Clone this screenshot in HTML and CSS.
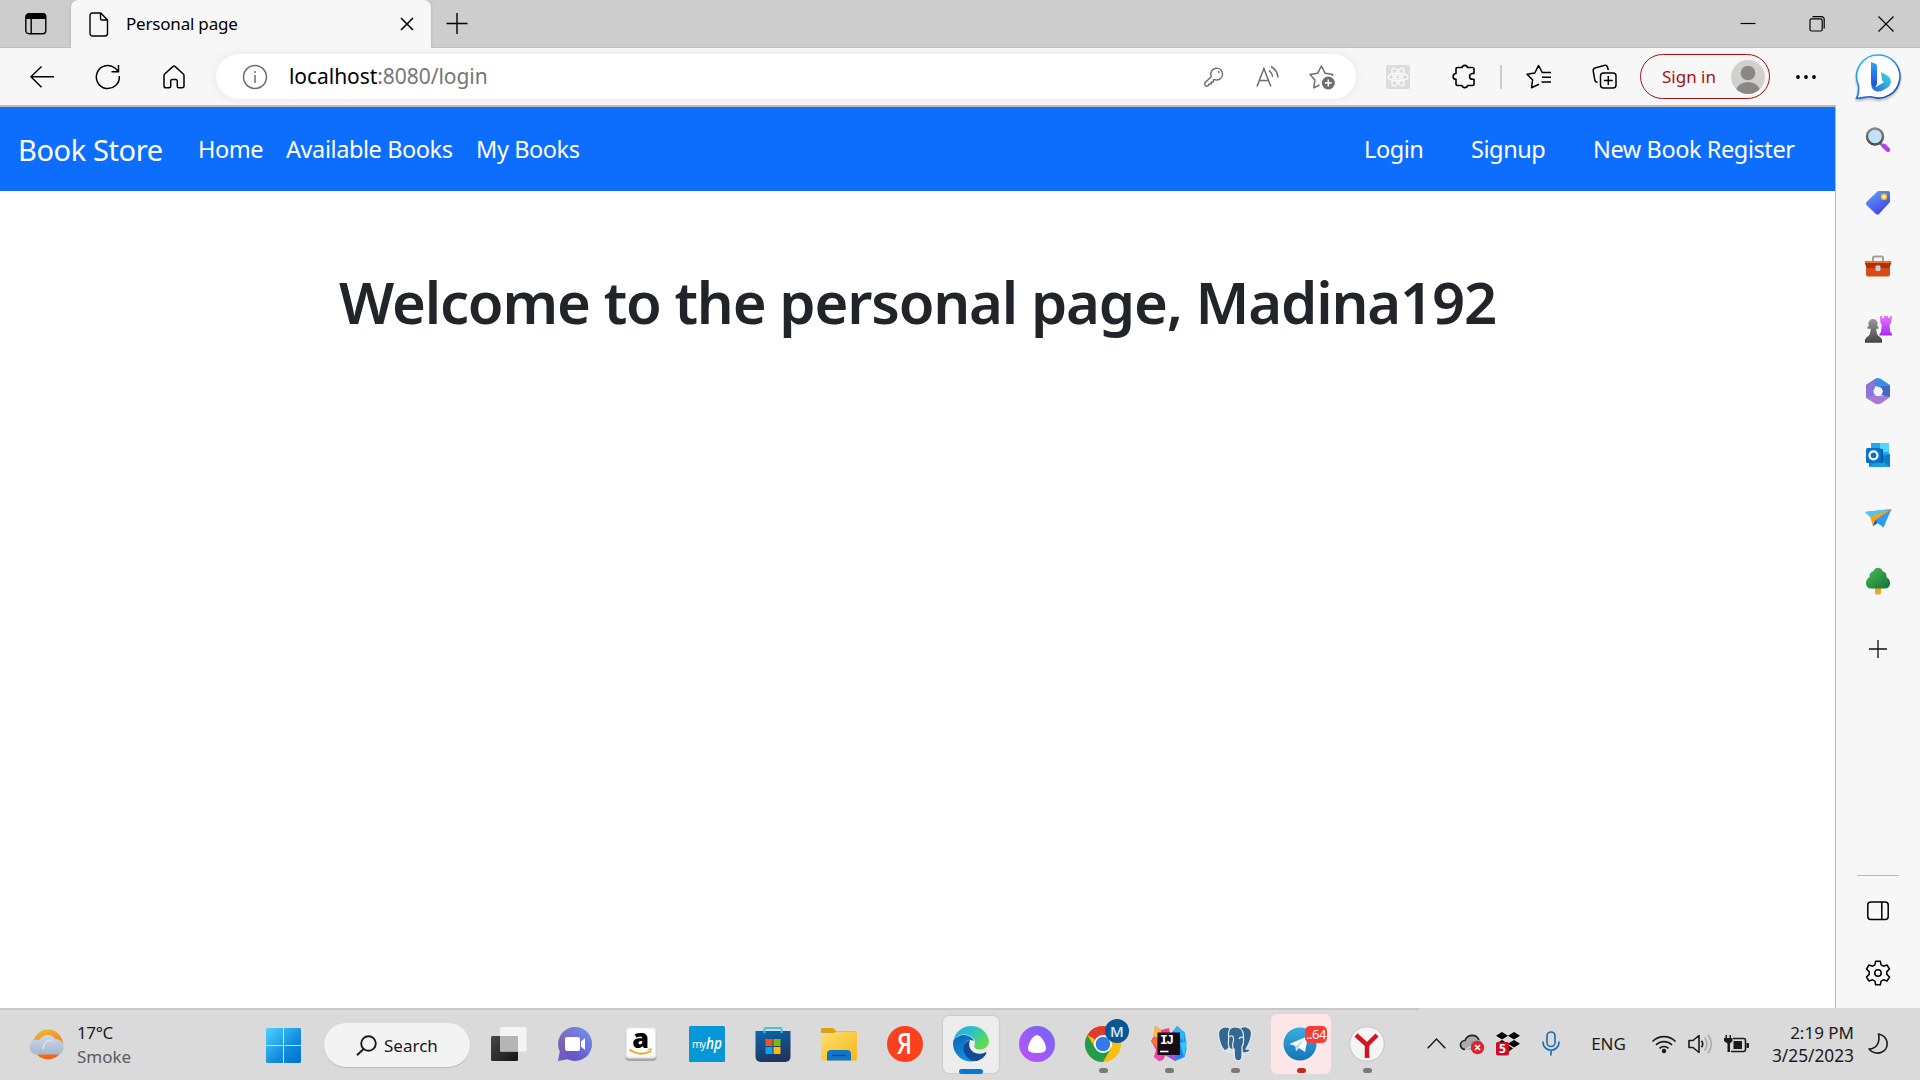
FILE: index.html
```html
<!DOCTYPE html>
<html lang="en">
<head>
<meta charset="utf-8">
<title>Personal page</title>
<link rel="stylesheet" href="styles.css">
</head>
<body>
<div class="desktop">
<header class="titlebar">
  <div class="tab-actions"><svg width="22" height="22" viewBox="0 0 22 22" fill="none" stroke="#000" stroke-width="1.4"><rect x=".8" y=".8" width="20" height="20" rx="3.2"/><path d="M1 3a2.5 2.5 0 0 1 2.5-2.4h15A2.5 2.5 0 0 1 21 3v3H1z" fill="#000" stroke="none"/><path d="M6.2 6v15"/></svg></div>
  <div class="tab">
    <svg width="20" height="25" viewBox="0 0 20 25" fill="none" stroke="#000" stroke-width="1.4" stroke-linejoin="round"><path d="M3.5 1h8.300L18.500 8v13.500a2.500 2.500 0 0 1-2.500 2.500H3.500A2.500 2.500 0 0 1 1 21.500V3.500A2.500 2.500 0 0 1 3.500 1zM11.500 1v5.500A1.500 1.500 0 0 0 13 8h5.500"/></svg>
    <span class="tab-title t">Personal page</span>
    <svg width="14" height="14" viewBox="0 0 14 14" stroke="#000" stroke-width="1.6"><path d="M1 1l12 12M13 1L1 13"/></svg>
  </div>
  <div class="new-tab"><svg width="22" height="22" viewBox="0 0 22 22" stroke="#000" stroke-width="1.4"><path d="M.5 10.500h21M11 0v21"/></svg></div>
  <div class="window-controls">
    <span><svg width="16" height="16" viewBox="0 0 16 16"><path d="M.5 7.500h15" stroke="#000" stroke-width="1.200"/></svg></span>
    <span><svg width="16" height="16" viewBox="0 0 16 16" fill="none" stroke="#000" stroke-width="1.200"><rect x="1" y="2.800" width="12.200" height="12.200" rx="1.500"/><path d="M3.500 .7h9a2.600 2.600 0 0 1 2.700 2.700v9"/></svg></span>
    <span><svg width="16" height="16" viewBox="0 0 16 16" stroke="#000" stroke-width="1.200"><path d="M.5 .5l15 15M15.500 .5l-15 15"/></svg></span>
  </div>
</header>

<div class="browser">
  <div class="column">
    <div class="toolbar">
      <span class="tool"><svg width="24" height="22" viewBox="0 0 24 22" fill="none" stroke="#000" stroke-width="1.500"><path d="M24 10.700H1M11.500.5L1 10.700l10.500 10.500"/></svg></span>
      <span class="tool"><svg width="26" height="26" viewBox="0 0 26 26" fill="none" stroke="#000" stroke-width="1.500"><path d="M24.300 12a11.500 11.500 0 1 1-4-7.700l3 3.200M23.500 1v6.700h-7"/></svg></span>
      <span class="tool"><svg width="22" height="24" viewBox="0 0 22 24" fill="none" stroke="#000" stroke-width="1.500" stroke-linejoin="round"><path d="M1 10.500a2 2 0 0 1 .7-1.500L9.800 1.600a1.800 1.800 0 0 1 2.400 0L20.300 9a2 2 0 0 1 .7 1.500V21a1.800 1.800 0 0 1-1.800 1.800h-3.400A1.500 1.500 0 0 1 14.300 21.300V16a1.500 1.500 0 0 0-1.500-1.500H9.200A1.500 1.500 0 0 0 7.700 16v5.300a1.500 1.500 0 0 1-1.500 1.500H2.800A1.800 1.800 0 0 1 1 21z"/></svg></span>
      <div class="address">
        <svg width="26" height="26" viewBox="0 0 26 26" fill="none" stroke="#6d6d6d" stroke-width="1.500"><circle cx="13" cy="13" r="11.500"/><path d="M13 11v8"/><circle cx="13" cy="8" r="1" fill="#6d6d6d" stroke="none"/></svg>
        <span class="url t"><b>localhost</b>:8080/login</span>
        <span class="addr-icon"><svg width="20" height="20" viewBox="0 0 20 20" fill="none" stroke="#6d6d6d" stroke-width="1.400" stroke-linejoin="round"><path d="M7.300 9.500A5.900 5.900 0 1 1 11 12.700L9.500 12.800v2.200H7.300v2H5.300l-1.500 2H2.200A1.500 1.500 0 0 1 .8 17.500v-1.600z"/><circle cx="14.800" cy="5" r="1" fill="#6d6d6d" stroke="none"/></svg></span>
        <span class="addr-icon"><svg width="24" height="24" viewBox="0 0 24 24" fill="none" stroke="#6d6d6d" stroke-width="1.500"><path d="M1 21.500L7.900 3.500l6.900 18M3.300 15.500h9.200M13 5.500c2.200 1.800 3.300 3.700 3.600 6.300M15 1.500c4.300 2.500 6.600 6.500 7 11"/></svg></span>
        <span class="addr-icon"><svg width="26" height="26" viewBox="0 0 26 26" fill="none" stroke="#6d6d6d" stroke-width="1.500" stroke-linejoin="round"><path d="M10.500 21l-5.700 2.800 1.100-7.800L1 10.500l7.600-1.200L12.400 2l3.800 7.300 7.600 1.200-.8 1.500"/><circle cx="19.300" cy="19" r="6.500" fill="#6d6d6d" stroke="none"/><path d="M19.300 15.500v7M15.800 19h7" stroke="#fff"/></svg></span>
      </div>
      <span class="ext"><svg width="24" height="24" viewBox="0 0 24 24" fill="none" stroke="#f8f8f8" stroke-width="1.500"><rect width="24" height="24" rx="2" fill="#dcdcdc" stroke="none"/><ellipse cx="12" cy="12" rx="10" ry="3.800"/><ellipse cx="12" cy="12" rx="10" ry="3.800" transform="rotate(60 12 12)"/><ellipse cx="12" cy="12" rx="10" ry="3.800" transform="rotate(120 12 12)"/><circle cx="12" cy="12" r="2"/></svg></span>
      <span class="ext"><svg width="24" height="25" viewBox="0 0 24 25" fill="none" stroke="#000" stroke-width="1.600" stroke-linejoin="round"><path d="M5.500 3.500h4.500a2.900 2.900 0 0 1 5.600 0h5A1.500 1.500 0 0 1 22 5v4.500h-1.500a2.900 2.900 0 0 0 0 5.800H22v4.700a1.500 1.500 0 0 1-1.500 1.500h-4.900a2.900 2.900 0 0 1-5.600 0H5.500A1.500 1.500 0 0 1 4 20v-4.700a2.900 2.900 0 0 1 0-5.800V5a1.500 1.500 0 0 1 1.500-1.500z"/></svg></span>
      <i class="sep"></i>
      <span class="ext fav"><svg width="25" height="25" viewBox="0 0 25 25" fill="none" stroke="#000" stroke-width="1.500" stroke-linejoin="round"><path d="M13 20.300l-7.500 3.500 1.100-8L1 10.200l7.800-1.200L12.500 1.500l3.500 6.500M15.500 8.500H25M16 13.300h9M15.500 18H25"/></svg></span>
      <span class="ext"><svg width="25" height="26" viewBox="0 0 25 26" fill="none" stroke="#000" stroke-width="1.500"><rect x="8.500" y="9" width="15.500" height="15" rx="3"/><path d="M16.300 12v9M11.800 16.500h9M5.500 18.500C3.500 18 3 17 2.800 16L1.200 7C1 5.500 1.500 4.500 3 4L12 1.500c1.700-.5 3 .2 3.500 1.500l.8 3"/></svg></span>
      <div class="signin"><span class="t">Sign in</span><svg width="34" height="34" viewBox="0 0 34 34"><defs><clipPath id="face"><circle cx="17" cy="17" r="17"/></clipPath></defs><g clip-path="url(#face)"><rect width="34" height="34" fill="#d2d0ce"/><circle cx="17" cy="13" r="7.300" fill="#8a8785"/><ellipse cx="17" cy="31.500" rx="12" ry="9.500" fill="#8a8785"/></g></svg></div>
      <span class="dots"><svg width="20" height="4" viewBox="0 0 20 4"><circle cx="2" cy="2" r="1.900"/><circle cx="10" cy="2" r="1.900"/><circle cx="18" cy="2" r="1.900"/></svg></span>
    </div>
    <main class="page">
      <nav class="navbar">
        <a class="brand t">Book Store</a><a class="nav-home t">Home</a><a class="nav-avail t">Available Books</a><a class="nav-my t">My Books</a>
        <a class="nav-login t">Login</a><a class="nav-signup t">Signup</a><a class="nav-reg t">New Book Register</a>
      </nav>
      <h1 class="welcome"><span class="t">Welcome to the personal page, Madina192</span></h1>
    </main>
  </div>
  <aside class="sidebar">
    <div class="bing"><svg width="48" height="50" viewBox="0 0 48 50"><defs><linearGradient id="bo" x1="0" y1="0" x2=".6" y2="1"><stop offset="0" stop-color="#1fd0f2"/><stop offset=".5" stop-color="#2b8cee"/><stop offset="1" stop-color="#174ec4"/></linearGradient><linearGradient id="bb" x1="0" y1="0" x2="0" y2="1"><stop offset="0" stop-color="#2aa5f4"/><stop offset="1" stop-color="#1b48db"/></linearGradient><linearGradient id="bc" x1="1" y1="0" x2="0" y2="1"><stop offset="0" stop-color="#43e0d8"/><stop offset="1" stop-color="#1d63e5"/></linearGradient></defs><path d="M25 2a21.500 21.500 0 1 1-7 42c-4-1.200-9 1.300-15.500 1.300 2.500-4 2.500-7 2-13A21.500 21.500 0 0 1 25 2z" fill="#fff" stroke="url(#bo)" stroke-width="1.600"/><path d="M17 9l4.500 1.800q1.500.7 1.500 2.500V31l-2.500 4.500C18 34 17 32 17 29.500z" fill="url(#bb)"/><path d="M27 19l7 4c4 3 4 9-1 12l-5 2.800c-5 2-10.500-.3-11-6.300 1 3 3.500 3.500 6 2l7-4.500-2-2z" fill="url(#bc)"/></svg></div>
    <div class="side"><svg width="26" height="26" viewBox="0 0 26 26"><defs><linearGradient id="lens" x2="0" y2="1"><stop stop-color="#8a8a8a"/><stop offset="1" stop-color="#4b4b4b"/></linearGradient></defs><path d="M15 16l4 4" stroke="#777" stroke-width="2.500"/><path d="M19 19l4 3.800" stroke="#b83df5" stroke-width="4.500" stroke-linecap="round"/><circle cx="10" cy="9.500" r="8" fill="#bfe3f8" stroke="url(#lens)" stroke-width="2.500"/></svg></div>
    <div class="side"><svg width="26" height="26" viewBox="0 0 26 26"><defs><linearGradient id="tag" x2=".6" y2="1"><stop stop-color="#62a9f8"/><stop offset="1" stop-color="#4340e8"/></linearGradient></defs><path d="M13 1h10a2 2 0 0 1 2 2v9L14 24q-1.500 1.500-3 0L1.500 15q-1-1.500 0-3z" fill="url(#tag)"/><circle cx="19" cy="6.800" r="2.300" fill="#fff" stroke="#f6c713" stroke-width="1.800"/></svg></div>
    <div class="side"><svg width="28" height="22" viewBox="0 0 28 22"><path d="M9 7V3a1.500 1.500 0 0 1 1.500-1.500h7A1.500 1.500 0 0 1 19 3v4" fill="none" stroke="#a0a0a0" stroke-width="2"/><rect x="2" y="8" width="24" height="13.500" rx="2" fill="#db4b16"/><path d="M1 6h26v3l-2 4H3L1 9z" fill="#ab300d"/><rect x=".5" y="6" width="27" height="2" rx="1" fill="#ef7622"/><rect x="11.500" y="10.500" width="5" height="5.500" rx="1" fill="#ccc"/></svg></div>
    <div class="side"><svg width="28" height="28" viewBox="0 0 28 28"><defs><linearGradient id="rook" x2="0" y2="1"><stop stop-color="#e179fb"/><stop offset="1" stop-color="#ab25f5"/></linearGradient><linearGradient id="pawn" x2="0" y2="1"><stop stop-color="#999"/><stop offset="1" stop-color="#444"/></linearGradient></defs><path d="M16 1h2v2h2V1h4v2h2V1h2l-1 7-1.500 2 .8 7L28 19v1.500H15.500V19l1.500-2 .8-7L16.500 8z" fill="url(#rook)"/><path d="M9 4a4.600 4.600 0 0 1 3.800 7.300h1.700v2.400h-2.200c.2 5 1.400 6.800 4 8.500l1.700 2v3.500H1v-3.500l1.700-2c2.600-1.700 3.800-3.500 4-8.500H3.500v-2.400h1.700A4.600 4.600 0 0 1 9 4z" fill="url(#pawn)"/></svg></div>
    <div class="side"><svg width="26" height="27" viewBox="0 0 26 27"><path d="M1 7L10 1q2-1 4-.5L10 7v11l-9 2z" fill="#7472e0"/><path d="M10 1q3-1.500 6 0l9 6v11l-7-4-1-4-7-2z" fill="#398fe0"/><path d="M10 1v7l-3 5 2 5-8 2V7z" fill="#8b74d9"/><path d="M25 8v11l-9 6.500q-3 1.500-6 0L1 20l8-3 10 1z" fill="#a87ad6"/><path d="M25 8v11l-9-2 2-4-3-5z" fill="#4168c4"/><circle cx="13" cy="13.500" r="4.600" fill="#f7f7f7"/></svg></div>
    <div class="side"><svg width="26" height="26" viewBox="0 0 26 26"><rect x="6" y="1" width="18" height="17" fill="#29a7e9"/><path d="M15 1h9v9h-9z" fill="#50d9ff"/><path d="M4 14l21-2v13H4z" fill="#118bd8"/><path d="M4 25l21-13v13z" fill="#1d9fe6"/><path d="M15 17l10-5v13z" fill="#077fcb"/><rect x="6" y="7" width="12" height="14" fill="#075a9d"/><rect x="1" y="6" width="15" height="15" rx="1.500" fill="#0873cf"/><circle cx="8.500" cy="13.300" r="4" fill="none" stroke="#fff" stroke-width="2.200"/></svg></div>
    <div class="side"><svg width="27" height="20" viewBox="0 0 27 20"><path d="M0 4L26.500 1 18.500 19.500l-6-4.500L8 18l-2-9z" fill="#3299f0"/><path d="M0 4L26.500 1 5 9z" fill="#4dc6f5"/><path d="M26.500 1L5 8.500 8 18l2.500-6z" fill="#f0a51b"/><path d="M10.500 12L8 18l4.500-3z" fill="#1555b5"/></svg></div>
    <div class="side"><svg width="26" height="28" viewBox="0 0 26 28"><defs><linearGradient id="tree" x2="1" y2="1"><stop stop-color="#4dbe59"/><stop offset="1" stop-color="#127034"/></linearGradient></defs><path d="M10 20h6v5.500a2 2 0 0 1-2 2h-2a2 2 0 0 1-2-2z" fill="#f4a11b"/><path d="M13 .8q3 0 4.500 3.200Q22 5.500 21.500 10q4 2.500 3.500 7-1 4.500-5 4.500H6q-4 0-5-4.500-.5-4.500 3.500-7Q4 5.500 8.500 4 10 .8 13 .8z" fill="url(#tree)"/></svg></div>
    <div class="side plus"><svg width="18" height="18" viewBox="0 0 18 18" stroke="#111" stroke-width="1.300"><path d="M0 9h18M9 0v18"/></svg></div>
    <hr>
    <div class="side lower"><svg width="22" height="20" viewBox="0 0 22 20" fill="none" stroke="#000" stroke-width="1.500"><rect x=".8" y="1" width="20.400" height="17.500" rx="3"/><path d="M14.800 1v17.500"/></svg></div>
    <div class="side lower"><svg width="26" height="26" viewBox="0 0 26 26" fill="none" stroke="#000" stroke-width="1.500" stroke-linejoin="round"><circle cx="13" cy="13" r="3.200"/><path d="M10.700 1.200h4.600l.8 3.700 2.300 1.300 3.600-1.200 2.500 4-2.700 2.600v2.800l2.700 2.600-2.500 4-3.600-1.200-2.300 1.300-.8 3.700h-4.600l-.8-3.700-2.300-1.300L4 21l-2.500-4 2.700-2.600v-2.800L1.500 9 4 5l3.600 1.200 2.300-1.300z"/></svg></div>
  </aside>
</div>

<footer class="taskbar">
  <div class="weather"><svg width="37" height="31" viewBox="0 0 37 31"><defs><linearGradient id="cl" x2="0" y2="1"><stop stop-color="#cbd8e8"/><stop offset="1" stop-color="#a8b8cf"/></linearGradient><linearGradient id="sun" x2=".3" y2="1"><stop stop-color="#f3bd35"/><stop offset="1" stop-color="#f26411"/></linearGradient></defs><circle cx="18" cy="15.500" r="15" fill="url(#sun)"/><path d="M8 25.500a7.500 7.500 0 1 1 1.500-14.500 9.500 9.500 0 0 1 16-1 8 8 0 0 1 3 15.500z" fill="url(#cl)"/><path d="M13 20q1-9 10-9" fill="none" stroke="#dae3ef" stroke-width="1.500"/></svg>
    <div><span class="temp t">17°C</span><span class="smoke t">Smoke</span></div></div>
  <div class="start"><svg width="35" height="35" viewBox="0 0 35 35"><defs><linearGradient id="win" gradientUnits="userSpaceOnUse" x1="0" y1="0" x2="35" y2="35"><stop stop-color="#4fd3ff"/><stop offset=".6" stop-color="#138bdf"/><stop offset="1" stop-color="#0070d0"/></linearGradient></defs><path d="M1 0h16v17H0V1zM18 0h16l1 1v16H18zM0 18h17v17H1l-1-1zM18 18h17v16l-1 1H18z" fill="url(#win)"/></svg></div>
  <div class="search"><svg width="21" height="21" viewBox="0 0 21 21" fill="none" stroke="#1a1a1a" stroke-width="1.900"><circle cx="12.500" cy="8.500" r="7.300"/><path d="M7.500 14L1 20.200"/></svg><span class="t">Search</span></div>
  <div class="apps">
    <div class="app"><svg width="36" height="36" viewBox="0 0 36 36"><defs><linearGradient id="tv" x2="1" y2="1"><stop stop-color="#474747"/><stop offset="1" stop-color="#161616"/></linearGradient></defs><rect x="0" y="10" width="27" height="25" rx="1.500" fill="url(#tv)"/><rect x="9" y="1" width="26.500" height="24.500" rx="1.500" fill="#f4f4f4"/><path d="M9 10h18v15.500H9z" fill="#b5b5b5"/></svg></div>
    <div class="app"><svg width="36" height="36" viewBox="0 0 36 36"><defs><linearGradient id="chat" x1="0" y1=".2" x2="1" y2=".8"><stop stop-color="#8a61ab"/><stop offset=".5" stop-color="#675ac3"/><stop offset="1" stop-color="#5b54c5"/></linearGradient><linearGradient id="chat2" x1="1" y1="0" x2=".3" y2=".7"><stop stop-color="#7896f5"/><stop offset="1" stop-color="#7896f5" stop-opacity="0"/></linearGradient></defs><path d="M18 1a17 17 0 1 1-7.500 32.300L1 35l1.800-9.500A17 17 0 0 1 18 1z" fill="url(#chat)"/><path d="M18 1a17 17 0 1 1-7.500 32.300L1 35l1.800-9.500A17 17 0 0 1 18 1z" fill="url(#chat2)"/><rect x="8" y="11" width="15" height="14" rx="2" fill="#fff"/><path d="M24 15.500l4-3.500v12l-4-3.500z" fill="#fff"/></svg></div>
    <div class="app"><svg width="34" height="36" viewBox="0 0 34 36"><rect x="1.500" y="3" width="31" height="32" rx="4" fill="#a6a6a6"/><rect x="1.500" y="1.500" width="31" height="31" rx="4" fill="#e8e8e8"/><rect x="3" y="2.500" width="28" height="28" rx="3" fill="#fff"/><text x="16.700" y="22" text-anchor="middle" font-family="Open Sans,sans-serif" font-size="27" font-weight="800">a</text><path d="M5.500 23.500q11 7.500 21 1.500" fill="none" stroke="#f8a51b" stroke-width="2"/><path d="M23.500 23.500l3.500-.5-.5 3.500" fill="none" stroke="#f8a51b" stroke-width="1.200"/></svg></div>
    <div class="app"><svg width="36" height="36" viewBox="0 0 36 36"><rect width="36" height="36" rx="1.500" fill="#0796d6"/><text x="3" y="21.500" font-family="Open Sans,sans-serif" font-size="10.500" fill="#fff" textLength="14">my</text><text x="17" y="22.500" font-family="Open Sans,sans-serif" font-size="17" font-weight="600" font-style="italic" fill="#fff" textLength="16" lengthAdjust="spacingAndGlyphs">hp</text></svg></div>
    <div class="app"><svg width="36" height="36" viewBox="0 0 36 36"><defs><linearGradient id="st" x2=".4" y2="1"><stop stop-color="#0869b5"/><stop offset="1" stop-color="#20365f"/></linearGradient></defs><path d="M.5 5h35v26a5 5 0 0 1-5 5h-25a5 5 0 0 1-5-5z" fill="url(#st)"/><path d="M9.500 7V3a1 1 0 0 1 1-1h15a1 1 0 0 1 1 1v4" fill="none" stroke="#38c5f3" stroke-width="2"/><path d="M10.500 13h7v7h-7z" fill="#f35123"/><path d="M18.500 13h7v7h-7z" fill="#7eba07"/><path d="M10.500 21h7v7h-7z" fill="#05a6ef"/><path d="M18.500 21h7v7h-7z" fill="#feba08"/></svg></div>
    <div class="app"><svg width="36" height="36" viewBox="0 0 36 36"><defs><linearGradient id="fo" x2="1" y2="1"><stop stop-color="#ffdf70"/><stop offset="1" stop-color="#f6b719"/></linearGradient></defs><path d="M0 3.500A1.500 1.500 0 0 1 1.500 2H12l3 3h19.500L36 7H0z" fill="#dda00f"/><path d="M0 9l12-1 3-2.500h19.500A1.500 1.500 0 0 1 36 7v25.500a2 2 0 0 1-2 2H2a2 2 0 0 1-2-2z" fill="url(#fo)"/><path d="M6 34.500V28a4 4 0 0 1 4-4h16a4 4 0 0 1 4 4v6.500z" fill="#1176c9"/><path d="M11 29.500h14" stroke="#0b4d91" stroke-width="1.500"/></svg></div>
    <div class="app"><svg width="36" height="36" viewBox="0 0 36 36"><circle cx="18" cy="18" r="18" fill="#fc3f1d"/><text x="17.500" y="27.500" text-anchor="middle" font-family="Open Sans,sans-serif" font-size="28" font-weight="600" fill="#fff" textLength="15" lengthAdjust="spacingAndGlyphs">Я</text></svg></div>
    <div class="app active"><svg width="36" height="36" viewBox="0 0 36 36"><defs><linearGradient id="e1" x2="1" y2=".6"><stop stop-color="#26a8e6"/><stop offset=".5" stop-color="#2cc2c9"/><stop offset="1" stop-color="#65dc46"/></linearGradient><linearGradient id="e2" x2=".5" y2="1"><stop stop-color="#0b64b3"/><stop offset="1" stop-color="#1192e1"/></linearGradient></defs><path d="M18 0a18 18 0 0 0-17.500 14C4 9 11 7 17 10c4 2 6 5 4.500 9-1 4 3 5 7 4.500C33 23 36 19 36 15 35 6 27 0 18 0z" fill="url(#e1)"/><path d="M.2 15C3 9.500 11 7 17 10.500c2 1 3.500 3 4 4.500-6-3-10 1-9.500 7 .5 8 8 11.500 12.500 12.500A18 18 0 0 1 .2 15z" fill="url(#e2)"/><path d="M17 14c-5 1-7.500 6-6 11.500C13 32 18 35.500 24 35c5-1.500 8-4.500 9.500-8 0-1-.7-1-1.500-.5-4 2-10 1.500-13-1.500-3-3-3.500-7-2-11z" fill="#104b94"/></svg><i class="run"></i></div>
    <div class="app"><svg width="36" height="36" viewBox="0 0 36 36"><defs><linearGradient id="al" x1="1" y1="0" x2="0" y2="1"><stop stop-color="#6c66fa"/><stop offset="1" stop-color="#c351f5"/></linearGradient></defs><circle cx="18" cy="18" r="18" fill="url(#al)"/><path d="M18 9c4 0 9 8.500 9 13.500C27 26.500 22 27 18 27s-9-.5-9-4.500C9 17.500 14 9 18 9z" fill="#fff"/></svg></div>
    <div class="app"><svg width="36" height="36" viewBox="0 0 36 36"><circle cx="18" cy="18" r="18" fill="#fbbd10"/><path d="M18 18L2.400 9A18 18 0 0 1 33.600 9H18z" fill="#de3c31"/><path d="M18 18L10.200 22.500 2.400 9A18 18 0 0 0 18 36l7.800-13.500z" fill="#249b4a"/><circle cx="18" cy="18" r="9" fill="#fff"/><circle cx="18" cy="18" r="7.300" fill="#347be8"/></svg><b class="profile">M</b><i class="run"></i></div>
    <div class="app"><svg width="36" height="36" viewBox="0 0 36 36"><path d="M4 0l6 4 8-2 2 16L12 34l-4 1-5-4 2-7-5-9 3-5z" fill="#f63f87"/><path d="M4 0l6 4v8l-8-1z" fill="#fdb548"/><path d="M0 15l6-4v11z" fill="#f87432"/><path d="M3 31l4-8 5 5-4 7z" fill="#ef46bb"/><path d="M20 8l6-8 8 7 1.500 16-2 8L24 35l-8-6z" fill="#1687f0"/><path d="M23 5l3-5 8 7-1 9z" fill="#30b5f7"/><path d="M12 28h15l-3 7z" fill="#9a55de"/><path d="M29 17l7-2-3 16z" fill="#38c7f0"/><rect x="6.500" y="6.500" width="22.500" height="22.500" fill="#170b16"/><text x="9" y="17.500" font-family="Liberation Mono,monospace" font-size="13" font-weight="700" fill="#fff" textLength="14">IJ</text><path d="M9 25.500h8.500" stroke="#fff" stroke-width="1.600"/></svg><i class="run"></i></div>
    <div class="app"><svg width="36" height="36" viewBox="0 0 36 36" fill="#336791" stroke="#e5eaf0" stroke-width="1.200"><path d="M13 2C7-.5 1 2 1.500 9c.4 6 3 13 5.500 15 2 1.500 4-1 6-3.500zM23 2c6-3 12 0 11.500 6-.5 6-3 11-5.500 15l5 .5c-2 3-6 4-9 3z"/><path d="M18 1c5 0 8.500 3 8.500 9 0 5 1 6.500-1.500 11v9c0 6-7 7-7.500 0L17 23c-3 1-5 0-5.500-4-.5-3 .5-5 0-9C11 4 13 1 18 1z"/><path d="M12 11c2-2 4-1.500 4.500 1 .5 3-1 5-1 8l1.500 5c-2 2-6 2-8 0 2 0 4-1 3.500-3M22 13c1-2 3-2.500 4.500-1" fill="none"/></svg><i class="run"></i></div>
    <div class="app alert"><svg width="36" height="36" viewBox="0 0 36 36"><defs><linearGradient id="tg" x2="0" y2="1"><stop stop-color="#37aee2"/><stop offset="1" stop-color="#1176b6"/></linearGradient></defs><circle cx="17" cy="18" r="16.500" fill="url(#tg)"/><path d="M6.500 18L25 10l-3 16-6-4-3 3-.5-5z" fill="#fff"/><path d="M12.500 20l9-7-6 8.500-2.500 3.500z" fill="#c5ddec"/></svg><b class="count">..64</b><i class="run"></i></div>
    <div class="app"><svg width="36" height="36" viewBox="0 0 36 36"><circle cx="18" cy="18" r="17.300" fill="#f5f5f5" stroke="#c3c3c3"/><path d="M7 9l11 10L28 9M18 18v14" fill="none" stroke="#d41520" stroke-width="4.500"/></svg><i class="run"></i></div>
  </div>
  <div class="tray">
    <span class="chev"><svg width="19" height="11" viewBox="0 0 19 11" fill="none" stroke="#1a1a1a" stroke-width="1.500"><path d="M.7 10.200L9.500 1l8.800 9.200"/></svg></span>
    <span class="w36"><svg width="26" height="22" viewBox="0 0 26 22"><path d="M6 16.500a4.500 4.500 0 0 1 0-9C8 1.500 17 0 20 7" fill="#aaa" stroke="#222" stroke-width="1.700"/><path d="M6 16.500h6V8l9-1 3 5" fill="#999"/><circle cx="18.500" cy="14.500" r="6.700" fill="#d9262e"/><path d="M16 12l5 5M21 12l-5 5" stroke="#fff" stroke-width="1.700"/></svg></span>
    <span class="w36 dropbox"><svg width="25" height="24" viewBox="0 0 25 24"><path d="M7 0l6 3.700L7 7.500 1 3.700zM19 0l6 3.700-6 3.800-6-3.800zM7 8l6 3.700L7 15.500l-6-3.800zM19 8l6 3.700-6 3.800-6-3.800zM13 13l5 3.500-5 3.500z" fill="#000"/><rect x="1" y="10" width="13" height="13.500" rx="2" fill="#ce0a27"/><text x="7.500" y="21" text-anchor="middle" font-family="Open Sans,sans-serif" font-size="12" font-weight="700" fill="#fff">5</text></svg></span>
    <span class="mic"><svg width="18" height="25" viewBox="0 0 18 25" fill="none" stroke="#1a69b3" stroke-width="1.600"><rect x="5" y="1" width="8" height="14.500" rx="4"/><path d="M1 10.500v.7a8 8 0 0 0 16 0v-.7M9 19v5.500"/></svg></span>
    <span class="eng"><span class="t">ENG</span></span>
    <span class="w36"><svg width="26" height="20" viewBox="0 0 26 20" fill="none" stroke="#1a1a1a" stroke-width="1.700"><path d="M1.500 7.500a16 16 0 0 1 23 0M5 11a11.200 11.200 0 0 1 16 0M8.500 14.300a6.500 6.500 0 0 1 9 0"/><circle cx="13" cy="17" r="2.200" fill="#1a1a1a" stroke="none"/></svg></span>
    <span class="w36"><svg width="25" height="22" viewBox="0 0 25 22" fill="none" stroke="#1a1a1a" stroke-width="1.600" stroke-linejoin="round"><path d="M1 7.500h4L11 2.500v17L5 14.500H1zM13.500 7.700q2.500 3.300 0 6.600"/><path d="M16.500 4.500q5 6.500 0 13M20 2q7 9 0 18" stroke="#aaa"/></svg></span>
    <span class="w36"><svg width="25" height="20" viewBox="0 0 25 20"><path d="M9 4.500h10.500A2 2 0 0 1 21.500 6.500v9a2 2 0 0 1-2 2H7" fill="none" stroke="#1a1a1a" stroke-width="1.600"/><path d="M9.500 7h8.500v8H9.500zM22.500 9H24a1 1 0 0 1 1 1v3a1 1 0 0 1-1 1h-1.500zM0 4h1.500V1H3v3h2.500V1H7v3h1.500v3L6 9.500V18H3.500V9.500L0 7z" fill="#1a1a1a"/></svg></span>
    <div class="clock"><span class="time t">2:19 PM</span><span class="date t">3/25/2023</span></div>
    <span class="moon"><svg width="20" height="22" viewBox="0 0 20 22" fill="none" stroke="#1a1a1a" stroke-width="1.600" stroke-linejoin="round"><path d="M10.500 1c10 2 11.500 14 3.500 18-4.500 2.200-10 1-13-3 7 0 11.500-6 9.500-15z"/></svg></span>
  </div>
</footer>
</div>
</body>
</html>
```
FILE: styles.css
```css
* { box-sizing: border-box; }
body { margin: 0; font-family: "Noto Sans", "Open Sans", sans-serif; color: #000; overflow: hidden; }
svg { display: block; flex: none; overflow: visible; }
.desktop { width: 1920px; height: 1080px; display: flex; flex-direction: column; background: #fff; }
.t { white-space: nowrap; }

.titlebar { height: 48px; flex: none; display: flex; background: #cdcdcd; border-bottom: 1px solid #bebebe; }
.tab-actions { width: 71px; display: flex; align-items: center; justify-content: center; }
.tab { width: 360px; height: 48px; background: #f7f7f7; border-radius: 7px 7px 0 0; display: flex; align-items: center; padding: 0 17px 0 18px; box-shadow: 0 0 3px #aaa; clip-path: inset(0 -4px 0 -4px); }
.tab-title { flex: 1; margin-left: 17px; font-size: 17px; letter-spacing: -.2px; padding-bottom: 2px; }
.new-tab { width: 52px; display: flex; align-items: center; justify-content: center; }
.window-controls { margin-left: auto; display: flex; }
.window-controls span { width: 69px; display: flex; align-items: center; justify-content: center; }

.browser { height: 960px; flex: none; display: flex; background: #f7f7f7; }
.column { width: 1836px; display: flex; flex-direction: column; }
.toolbar { height: 59px; flex: none; padding: 6px 0 6px 9px; display: flex; align-items: center; border-bottom: 2px solid #bbb; }
.tool, .ext { width: 66px; flex: none; display: flex; justify-content: center; }
.address { width: 1140px; height: 45px; margin-left: 9px; flex: none; background: #fff; border-radius: 23px; box-shadow: 0 0 8px #e4e4e4; display: flex; align-items: center; padding: 0 7px 0 26px; }
.url { flex: 1; margin-left: 21px; font-size: 21px; letter-spacing: -.05px; color: #767676; padding-bottom: 1px; }
.url b { font-weight: 400; color: #000; }
.addr-icon { width: 54px; display: flex; justify-content: center; }
.address + .ext { margin-left: 9px; }
.sep { width: 2px; height: 24px; background: #ccc; margin-left: 3px; flex: none; }
.fav { margin-left: 3px; }
.signin { width: 130px; height: 45px; margin-left: 3px; flex: none; border: 1.5px solid #a80f14; border-radius: 23px; display: flex; align-items: center; justify-content: space-between; padding: 0 4px 0 21px; font-size: 17px; color: #a80f14; }
.dots { flex: 1; padding-left: 6px; display: flex; justify-content: center; }

.page { flex: 1; background: #fff; border-right: 1px solid #bbb; }
.navbar { height: 84px; background: #0d6efd; color: #fff; display: flex; align-items: center; padding: 0 40px 0 18px; font-size: 23.5px; letter-spacing: -.42px; }
.brand { width: 180px; font-size: 29px; letter-spacing: -.4px; }
.nav-home { width: 88px; }
.nav-avail { width: 190px; }
.nav-login { margin-left: auto; width: 107px; }
.nav-signup { width: 122px; }
.nav-reg { width: 202px; }
.welcome { margin: 71px 0 0; text-align: center; font-size: 58px; line-height: 80px; font-weight: 600; letter-spacing: -1.18px; color: #212529; }

.sidebar { width: 84px; display: flex; flex-direction: column; align-items: center; padding-top: 5px; }
.bing { height: 55px; filter: drop-shadow(0 2px 1px #bbb); }
.side { height: 63px; flex: none; display: flex; align-items: center; justify-content: center; }
.plus { height: 74px; }
.sidebar hr { width: 42px; height: 1px; border: 0; background: #bbb; margin: auto 0 4px; }
.lower { height: 62px; }
.sidebar .lower:last-child { margin-bottom: 4px; }

.taskbar { height: 72px; display: flex; background: #dadada; position: relative; }
.taskbar::before { content: ""; position: absolute; top: 0; left: 0; width: 1419px; height: 2px; background: #c8c8c8; }
.weather { width: 250px; padding-left: 30px; display: flex; align-items: center; gap: 10px; font-size: 17px; color: #1a1a1a; }
.weather div { display: flex; flex-direction: column; align-items: flex-start; line-height: 24px; padding-top: 2px; }
.temp { letter-spacing: -.4px; }
.smoke { color: #5b5b5b; }
.start { width: 66px; display: flex; align-items: center; justify-content: center; padding-top: 2px; }
.search { width: 146px; height: 44px; margin: 15px 6px 0 8px; background: #f3f3f3; border-radius: 22px; box-shadow: 0 1px 1px #bbb; display: flex; align-items: center; padding-left: 32px; gap: 7px; font-size: 17px; color: #1a1a1a; }
.apps { display: flex; padding: 6px 0 4px; }
.app { width: 58px; height: 60px; margin: 0 4px; border-radius: 6px; display: flex; align-items: center; justify-content: center; position: relative; }
.active { width: 56px; height: 57px; margin: 2px 5px; background: #ededed; box-shadow: 0 0 2px #aaa; padding-bottom: 1px; }
.alert { width: 60px; margin: 0 3px; background: #fde6e8; }
.run { position: absolute; bottom: 1px; left: calc(50% - 4px); width: 9px; height: 5px; border-radius: 3px; background: #7a7a7a; }
.active .run { width: 24px; left: 16px; bottom: -1px; background: #0878d4; }
.alert .run { background: #c42b1c; }
.profile { position: absolute; left: 31px; top: 5px; width: 24px; height: 24px; border-radius: 50%; background: #075796; color: #d9eaf7; font: 600 15px/24px "Open Sans", sans-serif; text-align: center; }
.count { position: absolute; left: 34px; top: 12px; width: 22px; height: 17px; border-radius: 5px; background: #f33e3a; color: #fff; font: 13px/17px "Open Sans", sans-serif; text-align: center; letter-spacing: -.5px; }
.tray { display: flex; align-items: center; margin-left: 18px; color: #1a1a1a; font-size: 17px; padding-bottom: 1px; }
.tray > span { display: flex; align-items: center; justify-content: center; }
.chev { width: 36px; }
.w36 { width: 36px; }
.dropbox { padding-right: 2px; }
.mic { width: 49px; }
.eng { width: 67px; margin-right: 4px; }
.clock { width: 100px; display: flex; flex-direction: column; align-items: flex-end; line-height: 23px; }
.date { font-size: 17.3px; }
.moon { width: 48px; }
```
